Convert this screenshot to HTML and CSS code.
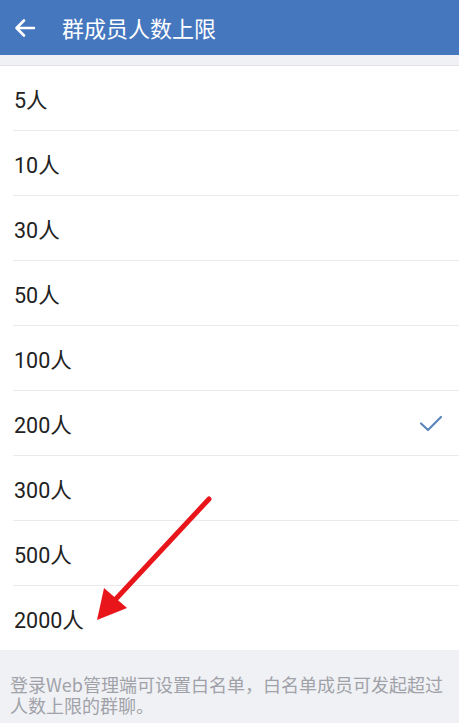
FILE: index.html
```html
<!DOCTYPE html>
<html lang="zh-CN">
<head>
<meta charset="utf-8">
<title>群成员人数上限</title>
<link rel="stylesheet" href="styles.css">
</head>
<body>
<div class="page">
  <header class="topbar">
    <svg class="back" width="24" height="24" viewBox="0 0 24 24"><path d="M21 12H4M11 4.5L3.5 12L11 19.5" fill="none" stroke="#fff" stroke-width="2.6" stroke-linecap="round" stroke-linejoin="round"/></svg>
    <span class="title">群成员人数上限</span>
  </header>
  <div class="gap"></div>
  <ul class="list">
    <li class="row"><span>5人</span></li>
    <li class="row"><span>10人</span></li>
    <li class="row"><span>30人</span></li>
    <li class="row"><span>50人</span></li>
    <li class="row"><span>100人</span></li>
    <li class="row"><span>200人</span>
      <svg class="check" width="24" height="18" viewBox="0 0 24 18"><path d="M2 8.5L9 15L22 2" fill="none" stroke="#5a86b9" stroke-width="2.2" stroke-linecap="round" stroke-linejoin="round"/></svg>
    </li>
    <li class="row"><span>300人</span></li>
    <li class="row"><span>500人</span></li>
    <li class="row"><span>2000人</span></li>
  </ul>
  <p class="note">登录Web管理端可设置白名单，白名单成员可发起超过人数上限的群聊。</p>
  <svg class="annot" width="459" height="723" viewBox="0 0 459 723">
    <line x1="209" y1="499" x2="114" y2="601" stroke="#e8161b" stroke-width="5" stroke-linecap="round"/>
    <polygon points="97,620 104,588 127,608" fill="#e8161b"/>
  </svg>
</div>
</body>
</html>
```
FILE: styles.css
```css
* { box-sizing: border-box; }
html, body { margin: 0; padding: 0; }
body {
  width: 459px;
  height: 723px;
  overflow: hidden;
  background: #f0f1f5;
  font-family: Roboto, "Noto Sans CJK SC", sans-serif;
}
.page { position: relative; width: 459px; height: 723px; }
.topbar {
  height: 55px;
  background: #4577bf;
  display: flex;
  align-items: center;
  padding-left: 13px;
}
.back { display: block; }
.title {
  margin-left: 25px;
  color: #fff;
  font-size: 22px;
  font-family: "Noto Sans CJK SC", sans-serif;
  letter-spacing: 0;
  line-height: 1;
  margin-top: -2px;
}
.gap { height: 10px; background: #f0f1f5; }
.list {
  list-style: none;
  margin: 0;
  padding: 0;
  background: #fff;
  border-top: 1px solid #e2e3e7;
}
.row {
  height: 65px;
  margin-left: 13px;
  padding-left: 1px;
  padding-right: 16px;
  border-bottom: 1px solid #ebebeb;
  display: flex;
  align-items: center;
  justify-content: space-between;
  font-size: 21.5px;
  color: #222;
}
.row:last-child { border-bottom: none; height: 64px; }
.row span { margin-top: 1px; }
.check { display: block; margin-top: 2px; }
.note {
  margin: 0;
  padding: 24px 8px 0 10px;
  font-size: 18px;
  line-height: 21px;
  color: #a0a2a8;
  font-family: "Noto Sans CJK SC", sans-serif;
}
.annot { position: absolute; left: 0; top: 0; pointer-events: none; }
```
